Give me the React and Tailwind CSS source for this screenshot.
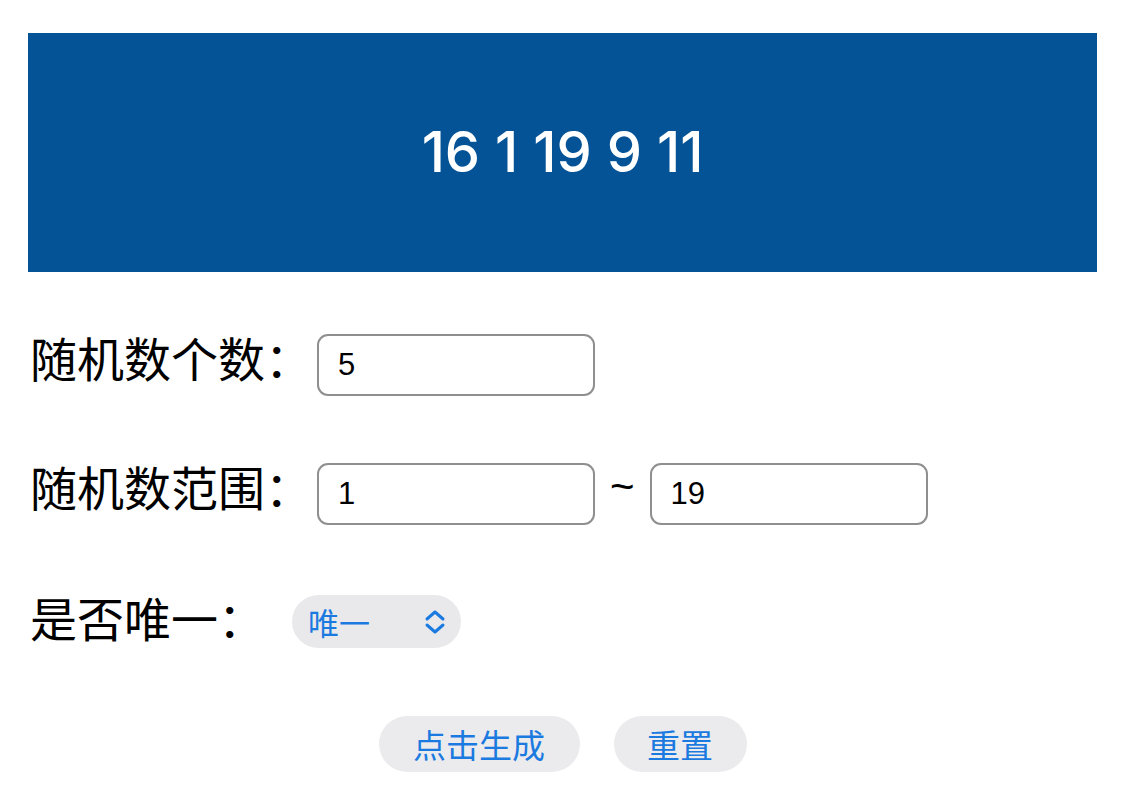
import { useState } from "react";

const cjk = "font-['Noto_Sans_CJK_SC',sans-serif]";

function Chevrons() {
  return (
    <svg width="22" height="26" viewBox="0 0 22 26" fill="none" stroke="#1b7ae0" strokeWidth="3" strokeLinecap="round" strokeLinejoin="round">
      <path d="M3 10 L11 3 L19 10" />
      <path d="M3 16 L11 23 L19 16" />
    </svg>
  );
}

function Field({ value, onChange }) {
  return (
    <input
      value={value}
      onChange={(e) => onChange(e.target.value)}
      className="w-[278px] h-[62px] rounded-[11px] border-2 border-[#8f8f8f] bg-white px-[19px] text-[31px] text-black font-['Liberation_Sans',sans-serif] outline-none"
    />
  );
}

export default function App() {
  const [count, setCount] = useState("5");
  const [min, setMin] = useState("1");
  const [max, setMax] = useState("19");

  return (
    <div className="w-[1125px] h-[801px] bg-white pt-[33px] px-[28px]">
      <div className="h-[239px] bg-[#035396] flex items-center justify-center">
        <span className="text-white text-[56px] font-medium tracking-[0px] font-['Inter',sans-serif] -mt-[2px]">
          16 1 19 9 11
        </span>
      </div>

      <div className="mt-[62px] flex items-center">
        <span className={`${cjk} text-[47px] leading-none text-black ml-[2px] -mt-[18px]`}>随机数个数：</span>
        <div className="ml-[5px]">
          <Field value={count} onChange={setCount} />
        </div>
      </div>

      <div className="mt-[67px] flex items-center">
        <span className={`${cjk} text-[47px] leading-none text-black ml-[2px] -mt-[18px]`}>随机数范围：</span>
        <div className="ml-[5px] flex items-center">
          <Field value={min} onChange={setMin} />
          <span className="mx-[15px] text-[42px] leading-none text-black font-['Liberation_Sans',sans-serif] -mt-[14px]">~</span>
          <Field value={max} onChange={setMax} />
        </div>
      </div>

      <div className="mt-[70px] flex items-center">
        <span className={`${cjk} text-[47px] leading-none text-black ml-[2px] -mt-[10px]`}>是否唯一：</span>
        <button className="ml-[27px] w-[169px] h-[53px] rounded-full bg-[#e9e9eb] flex items-center justify-between pl-[16px] pr-[15px]">
          <span className={`${cjk} text-[31px] leading-none text-[#1b7ae0]`}>唯一</span>
          <Chevrons />
        </button>
      </div>

      <div className="mt-[68px] flex justify-center gap-[34px]">
        <button className={`${cjk} w-[201px] h-[56px] rounded-full bg-[#ebebed] text-[33px] leading-none text-[#1b7ae0]`}>
          点击生成
        </button>
        <button className={`${cjk} w-[133px] h-[56px] rounded-full bg-[#ebebed] text-[33px] leading-none text-[#1b7ae0]`}>
          重置
        </button>
      </div>
    </div>
  );
}
